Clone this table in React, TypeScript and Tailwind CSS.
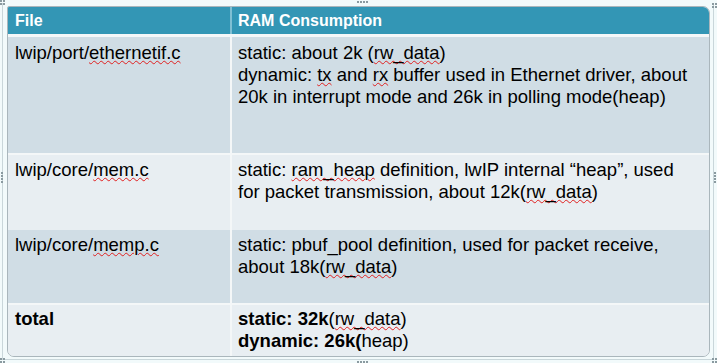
import React from "react";

const Typo = ({ children }: { children: React.ReactNode }) => (
  <span className="underline decoration-wavy decoration-[#e02020] decoration-1 underline-offset-[1px]">{children}</span>
);

const Dots = ({ className, vertical }: { className: string; vertical?: boolean }) => (
  <div className={`absolute flex ${vertical ? "flex-col" : "flex-row"} gap-[1px] ${className}`}>
    {[0, 1, 2, 3].map((i) => (
      <div key={i} className="h-[2px] w-[2px] bg-[#8a9aa0]" />
    ))}
  </div>
);

const Corner = ({ className }: { className: string }) => (
  <div className={`absolute grid grid-cols-2 gap-[1px] ${className}`}>
    {[0, 1, 2, 3].map((i) => (
      <div key={i} className="h-[2px] w-[2px] bg-[#8a9aa0]" />
    ))}
  </div>
);

export default function App() {
  return (
    <div
      className="relative h-[363px] w-[717px] overflow-hidden bg-[#f2fafb] pl-[7px] pt-[6px] text-black"
      style={{ fontFamily: '"Liberation Sans", Arial, sans-serif' }}
    >
      <div className="absolute left-[2px] top-[3px] bottom-[3px] w-px bg-[#c9d6da]" />
      <div className="absolute right-[3px] top-[3px] bottom-[3px] w-px bg-[#c9d6da]" />
      <div className="absolute left-[2px] right-[3px] bottom-[3px] h-px bg-[#c9d6da]" />

      <div className="flex h-[351px] w-[703px] flex-col overflow-hidden rounded-tr-[7px] rounded-bl-[7px] rounded-br-[7px] rounded-tl-[2px] border border-[#aab6bc] bg-[#f4f7f8] text-[18.5px] leading-[22px]">
        {/* header */}
        <div className="flex h-[27px] shrink-0 bg-[#3396b5] text-[16px] font-bold text-white">
          <div className="w-[222px] pl-[7px] pt-[3px]">File</div>
          <div className="w-[2px] bg-[#7fbfd3]" />
          <div className="flex-1 pl-[6px] pt-[3px]">RAM Consumption</div>
        </div>
        <div className="h-[3px] shrink-0 bg-[#f4f7f8]" />

        {/* row 1 */}
        <div className="flex h-[116px] shrink-0 bg-[#d0dde5]">
          <div className="w-[222px] pl-[7px] pt-[5px]">
            lwip/port/<Typo>ethernetif.c</Typo>
          </div>
          <div className="w-[2px] bg-[#f4f7f8]" />
          <div className="flex-1 whitespace-nowrap pl-[6px] pt-[5px]">
            static: about 2k (<Typo>rw_data</Typo>)<br />
            dynamic: <Typo>tx</Typo> and <Typo>rx</Typo> buffer used in Ethernet driver, about<br />
            20k in interrupt mode and 26k in polling mode(heap)
          </div>
        </div>
        <div className="h-[2px] shrink-0 bg-[#f4f7f8]" />

        {/* row 2 */}
        <div className="flex h-[75px] shrink-0 bg-[#e8eef2]">
          <div className="w-[222px] pl-[7px] pt-[4px]">
            lwip/core/<Typo>mem.c</Typo>
          </div>
          <div className="w-[2px] bg-[#f4f7f8]" />
          <div className="flex-1 whitespace-nowrap pl-[6px] pt-[4px]">
            static: <Typo>ram_heap</Typo> definition, lwIP internal “heap”, used<br />
            for packet transmission, about 12k(<Typo>rw_data</Typo>)
          </div>
        </div>

        {/* row 3 */}
        <div className="flex h-[73px] shrink-0 bg-[#d0dde5]">
          <div className="w-[222px] pl-[7px] pt-[4px]">
            lwip/core/<Typo>memp.c</Typo>
          </div>
          <div className="w-[2px] bg-[#f4f7f8]" />
          <div className="flex-1 whitespace-nowrap pl-[6px] pt-[4px]">
            static: pbuf_pool definition, used for packet receive,<br />
            about 18k(<Typo>rw_data</Typo>)
          </div>
        </div>
        <div className="h-[2px] shrink-0 bg-[#f4f7f8]" />

        {/* total */}
        <div className="flex flex-1 bg-[#e8eef2]">
          <div className="w-[222px] pl-[7px] pt-[3px] font-bold">total</div>
          <div className="w-[2px] bg-[#f4f7f8]" />
          <div className="flex-1 whitespace-nowrap pl-[6px] pt-[3px]">
            <span className="font-bold">static: 32k</span>(<Typo>rw_data</Typo>)<br />
            <span className="font-bold">dynamic: 26k(</span>heap)
          </div>
        </div>
      </div>

      <Corner className="left-0 top-0" />
      <Corner className="right-0 top-[3px]" />
      <Corner className="left-0 bottom-0" />
      <Corner className="right-0 bottom-0" />
      <Dots className="left-[357px] top-[1px]" />
      <Dots className="left-[357px] bottom-0" />
      <Dots className="left-[1px] top-[172px]" vertical />
      <Dots className="right-[1px] top-[172px]" vertical />
    </div>
  );
}
